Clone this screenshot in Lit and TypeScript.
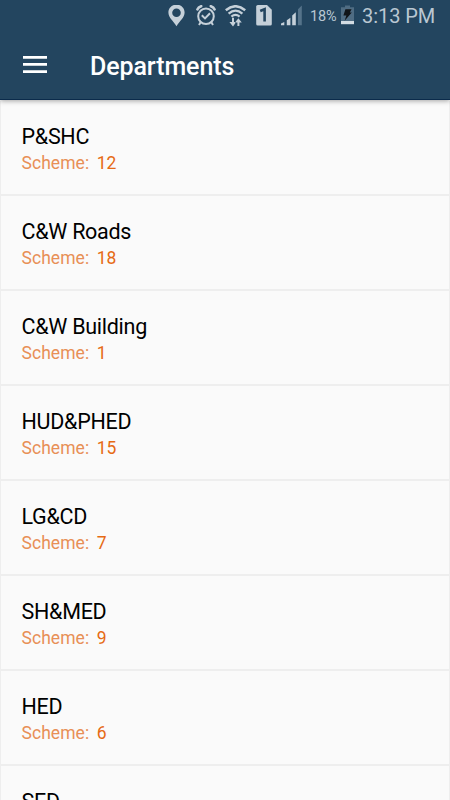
import { LitElement, html, css, nothing } from "lit";
import { customElement, property } from "lit/decorators.js";

interface Department {
  name: string;
  schemes?: number;
}

const DEPARTMENTS: Department[] = [
  { name: "P&SHC", schemes: 12 },
  { name: "C&W Roads", schemes: 18 },
  { name: "C&W Building", schemes: 1 },
  { name: "HUD&PHED", schemes: 15 },
  { name: "LG&CD", schemes: 7 },
  { name: "SH&MED", schemes: 9 },
  { name: "HED", schemes: 6 },
  { name: "SED" },
];

@customElement("status-bar")
export class StatusBar extends LitElement {
  static styles = css`
    :host {
      display: flex;
      justify-content: flex-end;
      align-items: center;
      box-sizing: border-box;
      height: 31px;
      padding-right: 14px;
      color: #bac7d2;
    }
    svg {
      display: block;
      flex: none;
    }
    .pin { margin-right: 11px; }
    .alarm { margin-right: 9px; }
    .wifi { margin-right: 10px; }
    .sim { margin-right: 9px; }
    .signal { margin-right: 8px; }
    .percent {
      width: 27px;
      font-size: 14.5px;
      line-height: 31px;
      letter-spacing: -0.1px;
      white-space: nowrap;
      margin: 1px 4px 0 0;
    }
    .battery { margin-right: 8px; }
    .time {
      width: 74px;
      font-size: 20px;
      line-height: 31px;
      letter-spacing: -0.05px;
      white-space: nowrap;
      margin-top: 2px;
    }
  `;

  render() {
    return html`
      <svg class="pin" width="17" height="22" viewBox="0 0 17 22">
        <path fill="#c5d0d9" fill-rule="evenodd" d="M8.5 -0.4C4 -0.4 0.4 3 0.4 7.6C0.4 12.8 5.2 15.8 8.5 21.3C11.8 15.8 16.6 12.8 16.6 7.6C16.6 3 13 -0.4 8.5 -0.4ZM8.5 3.4A4.3 4.3 0 1 1 8.5 12A4.3 4.3 0 1 1 8.5 3.4Z"/>
      </svg>
      <svg class="alarm" width="20" height="22" viewBox="0 0 20 22" fill="none" stroke="#c5d0d9">
        <circle cx="10" cy="11.2" r="7.8" stroke-width="2"/>
        <path stroke-width="2" d="M5.8 10.2l3.2 3.2 5-5.2"/>
        <path stroke-width="2.6" stroke-linecap="round" d="M1.4 4.4Q2.4 2 5.2 1.2M18.6 4.4Q17.6 2 14.8 1.2"/>
        <path stroke-width="2" d="M4.8 17L3 20M15.2 17L17 20"/>
      </svg>
      <svg class="wifi" width="21" height="22" viewBox="0 0 21 22" fill="none" stroke="#c5d0d9">
        <path stroke-width="2.4" d="M0.8 5.2Q10.5 -2.8 20.2 5.2"/>
        <path stroke-width="2.3" d="M3.6 8.6Q10.5 2.6 17.4 8.6"/>
        <path stroke-width="2.2" d="M6.4 11.6Q10.5 8 14.6 11.6"/>
        <path stroke-width="2" d="M8 12.8V19M13.4 21V15.5"/>
        <path fill="#c5d0d9" stroke="none" d="M4.4 17H11.2L8 21.5ZM10 17.6H16.8L13.4 13.2Z"/>
      </svg>
      <svg class="sim" width="16" height="22" viewBox="0 0 16 22">
        <path fill="#c5d0d9" d="M1.8 0H11L15.8 4.8V19Q15.8 20.6 14.2 20.6H1.8Q0.2 20.6 0.2 19V1.6Q0.2 0 1.8 0Z"/>
        <path fill="none" stroke="#23455f" stroke-width="2.6" d="M4.2 6L8.6 4.2V16.6"/>
      </svg>
      <svg class="signal" width="21" height="22" viewBox="0 0 21 22">
        <path fill="#c5d0d9" d="M0 18.6L3.3 17V20.2H0ZM5.8 15.2L9.4 12.8V20.2H5.8ZM11.2 10.5L14.8 7.3V20.2H11.2Z"/>
        <path fill="#55738a" d="M17 4.3L20.8 0.4V20.2H17Z"/>
      </svg>
      <span class="percent">18%</span>
      <svg class="battery" width="13" height="22" viewBox="0 0 13 22">
        <path fill="#4f6c83" d="M4 0.4H9V2.2H13V16H0V2.2H4Z"/>
        <path fill="#d3dce3" d="M0 16H13V19.2H0Z"/>
        <path fill="#101418" d="M4.4 4.2H10.6L8.8 7.6H10.8L3.6 15.8L5.4 10.6H2.4Z"/>
      </svg>
      <span class="time">3:13 PM</span>
    `;
  }
}

@customElement("department-row")
export class DepartmentRow extends LitElement {
  @property({ attribute: false }) department!: Department;

  static styles = css`
    :host {
      display: block;
      box-sizing: border-box;
      flex: none;
      height: 95px;
      padding: 22px 20px 0 20.5px;
      border: solid #eeeeee;
      border-width: 0 1px 2px;
    }
    .name {
      font-size: 21.5px;
      line-height: 27px;
      letter-spacing: -0.28px;
      color: #000;
    }
    .scheme {
      display: flex;
      gap: 7.5px;
      font-size: 17.5px;
      line-height: 27px;
      letter-spacing: 0.05px;
      color: #e88f56;
    }
    .count {
      color: #e66a14;
    }
  `;

  render() {
    const { name, schemes } = this.department;
    return html`
      <div class="name">${name}</div>
      ${schemes === undefined
        ? nothing
        : html`<div class="scheme">
            <span>Scheme:</span><span class="count">${schemes}</span>
          </div>`}
    `;
  }
}

@customElement("app-root")
export class AppRoot extends LitElement {
  static styles = css`
    :host {
      display: flex;
      flex-direction: column;
      height: 800px;
      overflow: hidden;
      background: #fafafa;
      font-family: Roboto, sans-serif;
    }
    .header {
      flex: none;
      box-sizing: border-box;
      height: 100px;
      background: #23455f;
      border-bottom: 1px solid #0b2b4b;
      box-shadow: 0 1px 5px rgba(0, 0, 0, 0.35);
      z-index: 1;
    }
    .toolbar {
      display: flex;
      align-items: center;
      height: 68px;
      padding-left: 23px;
      gap: 43px;
    }
    .menu {
      display: block;
    }
    .title {
      margin: 4px 0 0;
      font-size: 25px;
      font-weight: 500;
      line-height: 32px;
      letter-spacing: -0.1px;
      color: #fff;
    }
    .list {
      display: flex;
      flex-direction: column;
      margin-top: 1px;
    }
  `;

  render() {
    return html`
      <header class="header">
        <status-bar></status-bar>
        <div class="toolbar">
          <svg class="menu" width="24" height="18" viewBox="0 0 24 18">
            <path fill="#fff" d="M0 0H24V2.7H0ZM0 7.1H24V9.8H0ZM0 14.2H24V16.9H0Z"/>
          </svg>
          <h1 class="title">Departments</h1>
        </div>
      </header>
      <main class="list">
        ${DEPARTMENTS.map((d) => html`<department-row .department=${d}></department-row>`)}
      </main>
    `;
  }
}
